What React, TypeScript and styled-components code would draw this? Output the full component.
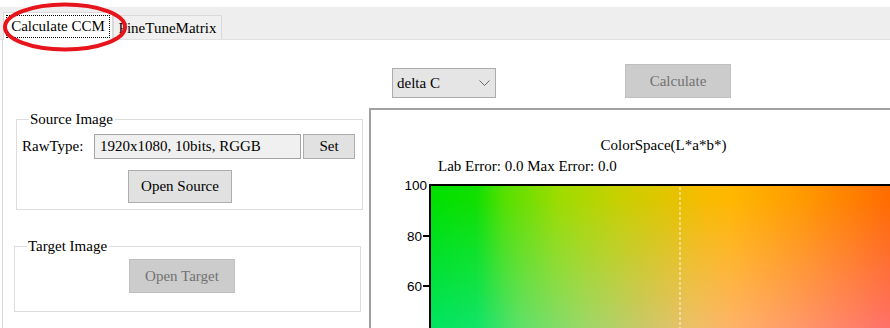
import React from 'react';
import styled, { createGlobalStyle } from 'styled-components';

const GlobalStyle = createGlobalStyle`
  body {
    margin: 0;
    background: #ffffff;
    font-family: "Liberation Serif", "Times New Roman", serif;
    font-size: 15px;
    color: #000;
  }
`;

const Page = styled.div`
  position: relative;
  width: 890px;
  height: 328px;
  overflow: hidden;
  background: #fff;
  padding-top: 7px;
  box-sizing: border-box;
`;

const TabStrip = styled.div`
  display: flex;
  align-items: flex-end;
  height: 32px;
  padding-left: 3px;
  background: #eeeeee;
  border-bottom: 1px solid #e1e1e1;
`;

const Tab = styled.div<{ $active?: boolean }>`
  box-sizing: border-box;
  display: flex;
  align-items: center;
  justify-content: center;
  width: ${(p) => (p.$active ? '110px' : '109px')};
  height: ${(p) => (p.$active ? '28px' : '24px')};
  margin-bottom: ${(p) => (p.$active ? '-1px' : '0')};
  background: ${(p) => (p.$active ? '#ffffff' : '#f0f0f0')};
  border: 1px solid #d9d9d9;
  border-bottom: none;
  position: relative;
  padding-top: ${(p) => (p.$active ? '0' : '1px')};
`;

const FocusLabel = styled.span`
  display: flex;
  align-items: center;
  justify-content: center;
  width: 104px;
  height: 23px;
  box-sizing: border-box;
  border: 1px dotted #000;
`;

const Body = styled.div`
  display: flex;
  margin-left: 2px;
  height: 300px;
  border-left: 1px solid #dadada;
`;

const LeftCol = styled.div`
  width: 366px;
  flex: none;
  padding-top: 71px;
  box-sizing: border-box;
`;

const Group = styled.fieldset<{ $left: number; $top: number; $bottom: number }>`
  margin: ${(p) => p.$top}px 0 0 ${(p) => p.$left}px;
  width: 347px;
  box-sizing: border-box;
  border: 1px solid #dcdcdc;
  padding: 0 6px ${(p) => p.$bottom}px 5px;
`;

const Legend = styled.legend`
  padding: 0 2px 0 1px;
  margin-left: 7px;
  line-height: 17px;
`;

const FieldRow = styled.div`
  display: flex;
  align-items: center;
  margin-top: 6px;
`;

const FieldLabel = styled.span`
  width: 72px;
  flex: none;
`;

const TextBox = styled.div`
  box-sizing: border-box;
  width: 207px;
  height: 25px;
  padding: 0 5px;
  display: flex;
  align-items: center;
  background: #f0f0f0;
  border: 1px solid #a5a5a5;
`;

const Button = styled.button<{ $w: number; $h: number; $disabled?: boolean }>`
  box-sizing: border-box;
  width: ${(p) => p.$w}px;
  height: ${(p) => p.$h}px;
  padding: 0;
  font-family: inherit;
  font-size: 15px;
  color: ${(p) => (p.$disabled ? '#727272' : '#000')};
  background: ${(p) => (p.$disabled ? '#cccccc' : '#e1e1e1')};
  border: 1px solid ${(p) => (p.$disabled ? '#bfbfbf' : '#adadad')};
`;

const CenterRow = styled.div<{ $indent: number; $gap: number }>`
  display: flex;
  margin-top: ${(p) => p.$gap}px;
  padding-left: ${(p) => p.$indent}px;
`;

const RightCol = styled.div`
  width: 590px;
  flex: none;
  display: flex;
  flex-direction: column;
`;

const TopBar = styled.div`
  display: flex;
  flex: none;
  align-items: flex-start;
  height: 68px;
  padding-top: 24px;
  box-sizing: border-box;
`;

const Select = styled.div`
  box-sizing: border-box;
  display: flex;
  align-items: center;
  justify-content: space-between;
  width: 104px;
  height: 30px;
  margin: 4px 0 0 23px;
  padding: 0 5px 0 4px;
  background: #e5e5e5;
  border: 1px solid #acacac;
`;

const CalcSlot = styled.div`
  margin-left: 129px;
`;

const ChartPanel = styled.div`
  flex: 1;
  border-top: 2px solid #a0a0a0;
  border-left: 2px solid #a0a0a0;
  background: #fff;
`;

const ChartTitle = styled.div`
  text-align: center;
  margin-top: 26px;
  width: 585px;
  line-height: 18px;
`;

const ErrorLine = styled.div`
  margin: 4px 0 3px 67px;
  line-height: 17px;
`;

const Plot = styled.svg`
  display: block;
  margin: 0 0 0 29px;
  font-family: "Liberation Sans", Arial, sans-serif;
`;

const Annotation = styled.svg`
  position: absolute;
  left: 0;
  top: 0;
  pointer-events: none;
`;

const LabPlot = () => (
  <Plot width="560" height="200" viewBox="0 0 560 200">
    <defs>
      <linearGradient id="topRow" gradientUnits="userSpaceOnUse" x1="30" y1="0" x2="490" y2="0">
        <stop offset="0" stopColor="#00e000" />
        <stop offset="0.1" stopColor="#10e000" />
        <stop offset="0.16" stopColor="#55e000" />
        <stop offset="0.28" stopColor="#9edc00" />
        <stop offset="0.41" stopColor="#c8d000" />
        <stop offset="0.52" stopColor="#e2c400" />
        <stop offset="0.59" stopColor="#f6bc00" />
        <stop offset="0.65" stopColor="#ffb800" />
        <stop offset="0.8" stopColor="#ff9c00" />
        <stop offset="1" stopColor="#ff6c00" />
      </linearGradient>
      <linearGradient id="bottomRow" gradientUnits="userSpaceOnUse" x1="30" y1="0" x2="490" y2="0">
        <stop offset="0" stopColor="#00e468" />
        <stop offset="0.1" stopColor="#10e470" />
        <stop offset="0.2" stopColor="#60e070" />
        <stop offset="0.33" stopColor="#98d870" />
        <stop offset="0.46" stopColor="#c8c870" />
        <stop offset="0.57" stopColor="#ecc070" />
        <stop offset="0.67" stopColor="#ffb070" />
        <stop offset="0.8" stopColor="#ff9870" />
        <stop offset="1" stopColor="#ff7070" />
      </linearGradient>
      <linearGradient id="fade" gradientUnits="userSpaceOnUse" x1="0" y1="20" x2="0" y2="160">
        <stop offset="0" stopColor="#000" />
        <stop offset="1" stopColor="#fff" />
      </linearGradient>
      <mask id="fadeMask">
        <rect x="30" y="7" width="530" height="200" fill="url(#fade)" />
      </mask>
    </defs>
    <rect x="30" y="7" width="530" height="200" fill="url(#topRow)" />
    <rect x="30" y="7" width="530" height="200" fill="url(#bottomRow)" mask="url(#fadeMask)" />
    <line x1="280" y1="9" x2="280" y2="200" stroke="#ffffff" strokeWidth="1" strokeDasharray="3 2" opacity="0.85" />
    <line x1="29" y1="7" x2="560" y2="7" stroke="#000" strokeWidth="2" />
    <line x1="30" y1="6" x2="30" y2="200" stroke="#000" strokeWidth="2" />
    <line x1="23" y1="58" x2="30" y2="58" stroke="#000" strokeWidth="2" />
    <line x1="23" y1="108" x2="30" y2="108" stroke="#000" strokeWidth="2" />
    <text x="27" y="12" fontSize="13.5" textAnchor="end" fill="#000">100</text>
    <text x="22" y="63" fontSize="13.5" textAnchor="end" fill="#000">80</text>
    <text x="22" y="113" fontSize="13.5" textAnchor="end" fill="#000">60</text>
  </Plot>
);

export default function App() {
  return (
    <>
      <GlobalStyle />
      <Page>
        <TabStrip>
          <Tab $active>
            <FocusLabel>Calculate CCM</FocusLabel>
          </Tab>
          <Tab>FineTuneMatrix</Tab>
        </TabStrip>
        <Body>
          <LeftCol>
            <Group $left={13} $top={0} $bottom={6}>
              <Legend>Source Image</Legend>
              <FieldRow>
                <FieldLabel>RawType:</FieldLabel>
                <TextBox>1920x1080, 10bits, RGGB</TextBox>
                <Button $w={52} $h={25} style={{ marginLeft: 2 }}>
                  Set
                </Button>
              </FieldRow>
              <CenterRow $indent={106} $gap={11}>
                <Button $w={104} $h={33}>Open Source</Button>
              </CenterRow>
            </Group>
            <Group $left={11} $top={28} $bottom={18}>
              <Legend>Target Image</Legend>
              <CenterRow $indent={109} $gap={4}>
                <Button $w={106} $h={34} $disabled>
                  Open Target
                </Button>
              </CenterRow>
            </Group>
          </LeftCol>
          <RightCol>
            <TopBar>
              <Select>
                <span>delta C</span>
                <svg width="11" height="7" viewBox="0 0 11 7">
                  <polyline points="0.5,0.5 5.5,5.5 10.5,0.5" fill="none" stroke="#6a6a6a" strokeWidth="1" />
                </svg>
              </Select>
              <CalcSlot>
                <Button $w={106} $h={34} $disabled>
                  Calculate
                </Button>
              </CalcSlot>
            </TopBar>
            <ChartPanel>
              <ChartTitle>ColorSpace(L*a*b*)</ChartTitle>
              <ErrorLine>Lab Error: 0.0 Max Error: 0.0</ErrorLine>
              <LabPlot />
            </ChartPanel>
          </RightCol>
        </Body>
        <Annotation width="140" height="60" viewBox="0 0 140 60">
          <ellipse cx="65" cy="27" rx="60" ry="22.5" fill="none" stroke="#e8141c" strokeWidth="4" />
        </Annotation>
      </Page>
    </>
  );
}
